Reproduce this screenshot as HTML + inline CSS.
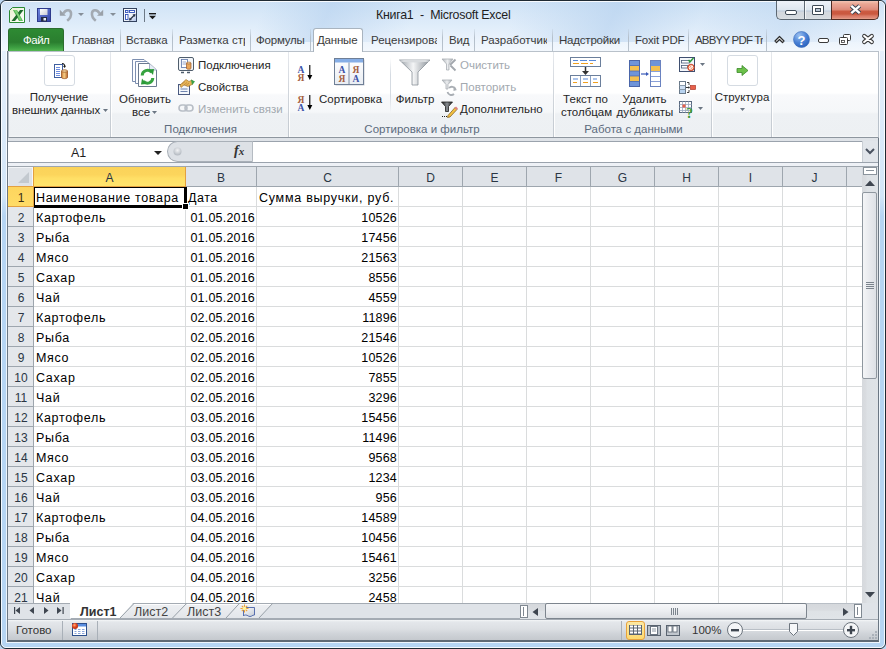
<!DOCTYPE html><html><head><meta charset="utf-8"><style>
html,body{margin:0;padding:0;width:886px;height:649px;overflow:hidden;background:#bcd6f1;}
body{position:relative;font-family:"Liberation Sans", sans-serif;}
.t{position:absolute;white-space:nowrap;font-family:"Liberation Sans", sans-serif;}
.b{position:absolute;box-sizing:border-box;}
svg.b{overflow:visible}
</style></head><body>
<div class="b" style="left:0px;top:0px;width:886px;height:649px;border:1px solid #1f2a33;border-radius:6px 6px 6px 6px;background:linear-gradient(180deg,#c9def5 0px,#d5e6f8 20px,#e6f0fb 45px,#dcebfa 120px,#d3e6f8 195px,#b6d5f3 215px,#b6d5f3 100%);"></div>
<div class="b" style="left:1px;top:1px;width:884px;height:647px;border:1px solid rgba(255,255,255,0.85);border-radius:5px;"></div>
<div class="b" style="left:2px;top:2px;width:882px;height:49px;background:linear-gradient(180deg,#cfe2f6 0px,#d8e8f8 12px,#e0edfa 24px,#ebf3fc 38px,#f3f8fd 49px);border-radius:4px 4px 0 0;"></div>
<div class="b" style="left:2px;top:2px;width:882px;height:40px;background:linear-gradient(115deg,rgba(190,214,240,0) 0px,rgba(190,214,240,0) 240px,rgba(180,208,238,0.55) 300px,rgba(190,214,240,0) 380px,rgba(190,214,240,0) 470px,rgba(180,208,238,0.6) 560px,rgba(190,214,240,0.1) 640px,rgba(180,208,238,0.4) 720px,rgba(190,214,240,0) 800px);"></div>
<div class="t" style="left:376px;top:7px;font-size:12.4px;line-height:16px;color:#1e1e1e;letter-spacing:-0.25px;">Книга1&nbsp;&nbsp;-&nbsp;&nbsp;Microsoft Excel</div>
<svg class="b" style="left:9px;top:7px;" width="16" height="16" viewBox="0 0 16 16">
<defs><linearGradient id="xg" x1="0" y1="0" x2="1" y2="1"><stop offset="0" stop-color="#e8efd0"/><stop offset="1" stop-color="#ffffff"/></linearGradient></defs>
<path d="M3.5 0.5 H15.5 V15.5 H0.5 V3.5 Z" fill="url(#xg)" stroke="#2a8a34"/>
<path d="M4 3 H8 L14 14 H10 Z" fill="#4fb64f"/>
<path d="M11 3 H14.5 L6 14 H2.5 Z" fill="#1d6b2c"/>
<path d="M5 3 H7.5 L13 13.5 H11 Z" fill="#7fd07a"/>
</svg>
<div class="b" style="left:29px;top:9px;width:1px;height:13px;background:#7a8796;"></div>
<svg class="b" style="left:37px;top:8px;" width="14" height="14" viewBox="0 0 14 14">
<defs><linearGradient id="svg1" x1="0" y1="0" x2="1" y2="1"><stop offset="0" stop-color="#6f86e0"/><stop offset="1" stop-color="#3344a6"/></linearGradient>
<linearGradient id="svg2" x1="0" y1="0" x2="1" y2="1"><stop offset="0" stop-color="#ffffff"/><stop offset="1" stop-color="#c9ccd6"/></linearGradient></defs>
<rect x="0.5" y="0.5" width="13" height="13" fill="url(#svg1)" stroke="#2d3a8c"/>
<rect x="3" y="1" width="7.5" height="6" fill="url(#svg2)"/>
<rect x="4" y="9" width="6" height="4.5" fill="#222a44"/>
<rect x="6.5" y="10" width="2.5" height="2.5" fill="#e8ecf4"/>
</svg>
<svg class="b" style="left:59px;top:8px;" width="14" height="14" viewBox="0 0 14 14"><path d="M4.5 5.5 C6.5 1.5 11.5 1.2 12 5 C12.4 8 10.5 11 8.2 12.8" fill="none" stroke="#a3aab2" stroke-width="2.6"/><path d="M0.8 1.8 V7.8 H7 Z" fill="#9aa1a9"/></svg>
<svg class="b" style="left:78px;top:13px;" width="6" height="3" viewBox="0 0 6 3"><path d="M0 0 H6 L3 3 Z" fill="#858e98"/></svg>
<svg class="b" style="left:90px;top:8px;" width="14" height="14" viewBox="0 0 14 14"><path d="M9.5 5.5 C7.5 1.5 2.5 1.2 2 5 C1.6 8 3.5 11 5.8 12.8" fill="none" stroke="#a3aab2" stroke-width="2.6"/><path d="M13.2 1.8 V7.8 H7 Z" fill="#9aa1a9"/></svg>
<svg class="b" style="left:110px;top:13px;" width="6" height="3" viewBox="0 0 6 3"><path d="M0 0 H6 L3 3 Z" fill="#858e98"/></svg>
<svg class="b" style="left:123px;top:8px;" width="14" height="14" viewBox="0 0 14 14"><defs><linearGradient id="fmg" x1="0" y1="0" x2="1" y2="1"><stop offset="0" stop-color="#ffffff"/><stop offset="0.6" stop-color="#eef2f8"/><stop offset="1" stop-color="#a9bde6"/></linearGradient></defs>
<rect x="0.5" y="0.5" width="13" height="13" fill="url(#fmg)" stroke="#34425e"/>
<rect x="2.5" y="2.5" width="2.5" height="2" fill="#fff" stroke="#3050b8" stroke-width="0.9"/>
<rect x="6.5" y="2.5" width="5" height="2" fill="#fff" stroke="#3050b8" stroke-width="0.9"/>
<rect x="2.5" y="6.5" width="2.5" height="5" fill="#fff" stroke="#3050b8" stroke-width="0.9"/>
<path d="M7 11.5 L11.5 7" stroke="#2a3448" stroke-width="1.2"/><path d="M6 12.5 L6.5 9.5 L9 12 Z M12.5 6 L12 9 L9.5 6.5 Z" fill="#2a3448"/></svg>
<div class="b" style="left:144px;top:9px;width:1px;height:13px;background:#6d7986;"></div>
<svg class="b" style="left:149px;top:13px;" width="7" height="7" viewBox="0 0 7 7"><rect x="0" y="0" width="7" height="1.4" fill="#1a1a1a"/><path d="M0 2.8 H7 L3.5 6.3 Z" fill="#1a1a1a"/></svg>
<div class="b" style="left:776px;top:1px;width:56px;height:19px;border:1px solid #5d6873;border-top:none;border-right:none;border-radius:0 0 0 5px;background:linear-gradient(180deg,#eef3f9 0px,#e6edf5 4px,#dde6ef 9px,#bdcbdc 10px,#d3d8de 11px,#d6dbe0 17px,#e9ecef 19px);"></div>
<div class="b" style="left:804px;top:1px;width:1px;height:18px;background:#5d6873;"></div>
<div class="b" style="left:805px;top:1px;width:1px;height:18px;background:rgba(255,255,255,0.7);"></div>
<div class="b" style="left:831px;top:1px;width:48px;height:19px;border:1px solid #4f2a22;border-top:none;border-radius:0 0 5px 0;background:linear-gradient(180deg,#f2c4b4 0px,#eaa592 3px,#e4998a 6px,#dd8976 9px,#cc5a42 10px,#c9583f 13px,#d97a66 15px,#de8a78 17px,#f0c8a8 19px);"></div>
<div class="b" style="left:785px;top:10px;width:12px;height:5px;background:#fff;border:1px solid #3e4a56;border-radius:2px;"></div>
<div class="b" style="left:812px;top:5px;width:12px;height:10px;background:#fff;border:1px solid #3e4a56;border-radius:1px;"></div>
<div class="b" style="left:815px;top:8px;width:6px;height:4px;background:#b9c6d4;border:1px solid #3e4a56;"></div>
<svg class="b" style="left:849px;top:4px;" width="13" height="12" viewBox="0 0 13 12"><path d="M2.3 1.9 L10.7 9.1 M10.7 1.9 L2.3 9.1" stroke="#3a4654" stroke-width="4.4" stroke-linecap="butt"/><path d="M2.3 1.9 L10.7 9.1 M10.7 1.9 L2.3 9.1" stroke="#ffffff" stroke-width="2.4" stroke-linecap="butt"/></svg>
<div class="b" style="left:8px;top:28px;width:56px;height:23px;background:linear-gradient(180deg,#2e8a33 0%,#2a7e2f 60%,#3ea043 85%,#55b652 100%);border:1px solid #2c6d2e;border-bottom:none;border-radius:3px 3px 0 0;"></div>
<div class="t" style="left:23px;top:33px;font-size:11.5px;line-height:14px;color:#ffffff;letter-spacing:-0.5px;">Файл</div>
<div class="b" style="left:120px;top:29px;width:1px;height:22px;background:linear-gradient(180deg,rgba(170,185,200,0.2),#b4bfca 40%,#b9c3cd);"></div>
<div class="b" style="left:172px;top:29px;width:1px;height:22px;background:linear-gradient(180deg,rgba(170,185,200,0.2),#b4bfca 40%,#b9c3cd);"></div>
<div class="b" style="left:250px;top:29px;width:1px;height:22px;background:linear-gradient(180deg,rgba(170,185,200,0.2),#b4bfca 40%,#b9c3cd);"></div>
<div class="b" style="left:310px;top:29px;width:1px;height:22px;background:linear-gradient(180deg,rgba(170,185,200,0.2),#b4bfca 40%,#b9c3cd);"></div>
<div class="b" style="left:442px;top:29px;width:1px;height:22px;background:linear-gradient(180deg,rgba(170,185,200,0.2),#b4bfca 40%,#b9c3cd);"></div>
<div class="b" style="left:474px;top:29px;width:1px;height:22px;background:linear-gradient(180deg,rgba(170,185,200,0.2),#b4bfca 40%,#b9c3cd);"></div>
<div class="b" style="left:552px;top:29px;width:1px;height:22px;background:linear-gradient(180deg,rgba(170,185,200,0.2),#b4bfca 40%,#b9c3cd);"></div>
<div class="b" style="left:628px;top:29px;width:1px;height:22px;background:linear-gradient(180deg,rgba(170,185,200,0.2),#b4bfca 40%,#b9c3cd);"></div>
<div class="b" style="left:688px;top:29px;width:1px;height:22px;background:linear-gradient(180deg,rgba(170,185,200,0.2),#b4bfca 40%,#b9c3cd);"></div>
<div class="b" style="left:766px;top:29px;width:1px;height:22px;background:linear-gradient(180deg,rgba(170,185,200,0.2),#b4bfca 40%,#b9c3cd);"></div>
<div class="b" style="left:313px;top:28px;width:50px;height:24px;background:#ffffff;border:1px solid #a9b4bf;border-bottom:none;border-radius:3px 3px 0 0;z-index:2;"></div>
<div class="t" style="left:72px;top:33px;font-size:11.5px;line-height:14px;color:#3b3b3b;z-index:3;letter-spacing:-0.2px;">Главная</div>
<div class="t" style="left:126px;top:33px;font-size:11.5px;line-height:14px;color:#3b3b3b;z-index:3;letter-spacing:-0.2px;">Вставка</div>
<div class="t" style="left:179px;top:33px;font-size:11.5px;line-height:14px;color:#3b3b3b;width:66px;overflow:hidden;z-index:3;">Разметка стр</div>
<div class="t" style="left:256px;top:33px;font-size:11.5px;line-height:14px;color:#3b3b3b;z-index:3;letter-spacing:-0.2px;">Формулы</div>
<div class="t" style="left:317px;top:33px;font-size:11.5px;line-height:14px;color:#3b3b3b;z-index:3;letter-spacing:-0.2px;">Данные</div>
<div class="t" style="left:371px;top:33px;font-size:11.5px;line-height:14px;color:#3b3b3b;width:66px;overflow:hidden;z-index:3;">Рецензирова</div>
<div class="t" style="left:449px;top:33px;font-size:11.5px;line-height:14px;color:#3b3b3b;z-index:3;letter-spacing:-0.2px;">Вид</div>
<div class="t" style="left:481px;top:33px;font-size:11.5px;line-height:14px;color:#3b3b3b;width:66px;overflow:hidden;z-index:3;">Разработчик</div>
<div class="t" style="left:559px;top:33px;font-size:11.5px;line-height:14px;color:#3b3b3b;z-index:3;letter-spacing:-0.2px;">Надстройки</div>
<div class="t" style="left:635px;top:33px;font-size:11.5px;line-height:14px;color:#3b3b3b;z-index:3;letter-spacing:-0.2px;">Foxit PDF</div>
<div class="t" style="left:695px;top:33px;font-size:11.5px;line-height:14px;color:#3b3b3b;width:68px;overflow:hidden;z-index:3;letter-spacing:-0.8px;">ABBYY PDF Tr</div>
<svg class="b" style="left:774px;top:35px;" width="11" height="9" viewBox="0 0 11 9"><path d="M1 6 L5.5 1.5 L10 6 L8.5 7.5 L5.5 4.5 L2.5 7.5 Z" fill="#fff" stroke="#2d2d2d" stroke-width="1.2" stroke-linejoin="round"/></svg>
<svg class="b" style="left:793px;top:31px;" width="17" height="17" viewBox="0 0 17 17"><defs><radialGradient id="hg" cx="35%" cy="25%" r="75%"><stop offset="0" stop-color="#9cc0f0"/><stop offset="0.6" stop-color="#4a82d6"/><stop offset="1" stop-color="#2f66c0"/></radialGradient></defs><circle cx="8.5" cy="8.5" r="8" fill="url(#hg)" stroke="#3a6cb8" stroke-width="0.6"/><text x="8.5" y="13.5" text-anchor="middle" font-family="Liberation Sans" font-weight="bold" font-size="13" fill="#fff">?</text></svg>
<div class="b" style="left:818px;top:38px;width:11px;height:5px;background:#fff;border:1px solid #3b3b3b;border-radius:2px;"></div>
<svg class="b" style="left:839px;top:34px;" width="12" height="11" viewBox="0 0 12 11"><rect x="4.5" y="0.5" width="7" height="6" rx="1" fill="#fff" stroke="#3b3b3b"/><rect x="0.5" y="3.5" width="8" height="7" rx="1" fill="#fff" stroke="#3b3b3b"/><rect x="2.5" y="6.5" width="3" height="2" fill="#fff" stroke="#3b3b3b" stroke-width="0.8"/></svg>
<svg class="b" style="left:862px;top:34px;" width="12" height="10" viewBox="0 0 12 10"><path d="M2.2 2 L9.8 8 M9.8 2 L2.2 8" stroke="#3b3b3b" stroke-width="4.2" stroke-linecap="round"/><path d="M2.2 2 L9.8 8 M9.8 2 L2.2 8" stroke="#fff" stroke-width="2.2" stroke-linecap="round"/></svg>
<div class="b" style="left:8px;top:51px;width:871px;height:87px;background:linear-gradient(180deg,#ffffff 0px,#ffffff 41px,#f8f9fb 43px,#f5f7f9 60px,#eef1f4 62px,#edf0f3 83px,#f6f7f9 85px);border:1px solid #b9c1ca;border-bottom:1px solid #8e969f;"></div>
<div class="b" style="left:110px;top:52px;width:1px;height:85px;background:linear-gradient(180deg,#e6e9ed,#d3d8de 40%,#c3c9d0);"></div>
<div class="b" style="left:111px;top:52px;width:1px;height:85px;background:rgba(255,255,255,0.9);"></div>
<div class="b" style="left:288px;top:52px;width:1px;height:85px;background:linear-gradient(180deg,#e6e9ed,#d3d8de 40%,#c3c9d0);"></div>
<div class="b" style="left:289px;top:52px;width:1px;height:85px;background:rgba(255,255,255,0.9);"></div>
<div class="b" style="left:553px;top:52px;width:1px;height:85px;background:linear-gradient(180deg,#e6e9ed,#d3d8de 40%,#c3c9d0);"></div>
<div class="b" style="left:554px;top:52px;width:1px;height:85px;background:rgba(255,255,255,0.9);"></div>
<div class="b" style="left:711px;top:52px;width:1px;height:85px;background:linear-gradient(180deg,#e6e9ed,#d3d8de 40%,#c3c9d0);"></div>
<div class="b" style="left:712px;top:52px;width:1px;height:85px;background:rgba(255,255,255,0.9);"></div>
<div class="b" style="left:771px;top:52px;width:1px;height:85px;background:linear-gradient(180deg,#e6e9ed,#d3d8de 40%,#c3c9d0);"></div>
<div class="b" style="left:772px;top:52px;width:1px;height:85px;background:rgba(255,255,255,0.9);"></div>
<div class="t" style="left:50.5px;width:300px;text-align:center;top:122px;font-size:11.5px;line-height:14px;color:#5c6b7d;">Подключения</div>
<div class="t" style="left:272px;width:300px;text-align:center;top:122px;font-size:11.5px;line-height:14px;color:#5c6b7d;">Сортировка и фильтр</div>
<div class="t" style="left:483.5px;width:300px;text-align:center;top:122px;font-size:11.5px;line-height:14px;color:#5c6b7d;">Работа с данными</div>
<div class="b" style="left:44px;top:55px;width:31px;height:31px;border:1px solid #d5dbe2;border-radius:3px;background:#fff;"></div>
<svg class="b" style="left:52px;top:62px;" width="17" height="18" viewBox="0 0 17 18">
<defs><linearGradient id="cyl" x1="0" x2="1"><stop offset="0" stop-color="#c7742e"/><stop offset="0.45" stop-color="#f6d08a"/><stop offset="1" stop-color="#b8652a"/></linearGradient></defs>
<rect x="2.5" y="2.5" width="8" height="13" fill="#ffffff" stroke="#3f5f9f"/>
<path d="M4 5.5 H8 M4 7.5 H8 M4 9.5 H8 M4 11.5 H8 M4 13.5 H8" stroke="#6d8ce0"/>
<path d="M10 1.5 C12 1.5 13 3 12.5 5" fill="none" stroke="#1d1d1d" stroke-width="1.2"/><path d="M11 4 L12.6 6 L14 3.8 Z" fill="#1d1d1d"/>
<path d="M9.5 9 V15.5 C9.5 17 15.5 17 15.5 15.5 V9 Z" fill="url(#cyl)" stroke="#9a5522" stroke-width="0.8"/>
<ellipse cx="12.5" cy="9" rx="3" ry="1.2" fill="#f8dca8" stroke="#9a5522" stroke-width="0.8"/>
</svg>
<div class="t" style="left:-91px;width:300px;text-align:center;top:90px;font-size:11.5px;line-height:14px;color:#262626;">Получение</div>
<div class="t" style="left:-94px;width:300px;text-align:center;top:103px;font-size:11.5px;line-height:14px;color:#262626;letter-spacing:-0.1px;">внешних данных</div>
<svg class="b" style="left:103px;top:109px;" width="5" height="3" viewBox="0 0 5 3"><path d="M0 0 H5 L2.5 3 Z" fill="#6b7683"/></svg>
<svg class="b" style="left:131px;top:58px;" width="28" height="30" viewBox="0 0 28 30">
<path d="M1.5 1.5 H13 L17 5.5 V23.5 H1.5 Z" fill="#fdfdff" stroke="#7d8fb0"/>
<path d="M4.5 3.5 H16 L20 7.5 V25.5 H4.5 Z" fill="#fdfdff" stroke="#7d8fb0"/>
<path d="M7.5 5.5 H18.5 L25.5 12 V28.5 H7.5 Z" fill="#ffffff" stroke="#6b7a90"/>
<path d="M18.5 5.5 V12 H25.5" fill="#e6ecf6" stroke="#8a9ab5" stroke-width="0.8"/>
<path d="M11.2 17.5 A5.3 5.3 0 0 1 20.5 14.2" fill="none" stroke="#36a340" stroke-width="3"/>
<path d="M21.8 20 A5.3 5.3 0 0 1 12.5 23.3" fill="none" stroke="#36a340" stroke-width="3"/>
<path d="M17.5 11.5 L23 11 L22 17 Z" fill="#2b9a38"/>
<path d="M15.5 26 L10 26.5 L11 20.5 Z" fill="#2b9a38"/>
</svg>
<div class="t" style="left:-5px;width:300px;text-align:center;top:92px;font-size:11.5px;line-height:14px;color:#262626;">Обновить</div>
<div class="t" style="left:132px;top:105px;font-size:11.5px;line-height:14px;color:#262626;">все</div>
<svg class="b" style="left:152px;top:111px;" width="5" height="3" viewBox="0 0 5 3"><path d="M0 0 H5 L2.5 3 Z" fill="#6b7683"/></svg>
<svg class="b" style="left:178px;top:57px;" width="17" height="17" viewBox="0 0 17 17"><rect x="0.5" y="0.5" width="15" height="13" rx="1.5" fill="#f2f5f9" stroke="#4f5d6c"/><path d="M3 15.5 H6 M9 15.5 H12" stroke="#4f5d6c" stroke-width="1.6"/>
<rect x="3.5" y="2.5" width="6" height="8" fill="#fff" stroke="#5b74a8" stroke-width="0.8"/><path d="M4.5 5 H8 M4.5 7 H8" stroke="#7a8fc0" stroke-width="0.8"/>
<path d="M8.5 6 V11.5 C8.5 12.5 13 12.5 13 11.5 V6 Z" fill="#e9a65a" stroke="#9a5522" stroke-width="0.7"/><ellipse cx="10.75" cy="6" rx="2.25" ry="0.9" fill="#f8dca8" stroke="#9a5522" stroke-width="0.6"/></svg>
<div class="t" style="left:198px;top:58px;font-size:11.5px;line-height:14px;color:#262626;">Подключения</div>
<svg class="b" style="left:178px;top:79px;" width="17" height="16" viewBox="0 0 17 16"><rect x="0.5" y="5.5" width="11" height="10" fill="#f4f7fb" stroke="#4a5a80"/><path d="M2.5 10 H9.5 M2.5 12.5 H9.5" stroke="#6f84b0"/><path d="M2 6 L8 0.5 L11 2.5 L14 1 L15 5 L10 7.5 L6 6 L3 8.5 Z" fill="#e6b458" stroke="#9a6a25" stroke-width="0.6"/><path d="M4 5 L7 2.5 M6 6 L9 3.5 M8 6.5 L11 4" stroke="#b07a30" stroke-width="0.6"/><path d="M13 0.5 L17 2.5 L14 6 Z" fill="#3aa048"/></svg>
<div class="t" style="left:198px;top:80px;font-size:11.5px;line-height:14px;color:#262626;">Свойства</div>
<svg class="b" style="left:178px;top:103px;" width="16" height="10" viewBox="0 0 16 10"><rect x="1" y="2" width="8" height="6" rx="3" fill="none" stroke="#b8bec6" stroke-width="1.6"/><rect x="7" y="2" width="8" height="6" rx="3" fill="none" stroke="#b8bec6" stroke-width="1.6"/></svg>
<div class="t" style="left:198px;top:102px;font-size:11.5px;line-height:14px;color:#a3a9b0;">Изменить связи</div>
<svg class="b" style="left:297px;top:64px;" width="17" height="18" viewBox="0 0 17 18"><text x="0.5" y="8.5" font-family="Liberation Serif" font-weight="bold" font-size="9.5" fill="#3b52a8">A</text><text x="0.5" y="16.5" font-family="Liberation Serif" font-weight="bold" font-size="9.5" fill="#a5603e">Я</text><path d="M12.8 1 V14" stroke="#000" stroke-width="1.1"/><path d="M10.3 11 L12.8 16 L15.3 11 Z" fill="#000"/></svg>
<svg class="b" style="left:297px;top:94px;" width="17" height="18" viewBox="0 0 17 18"><text x="0.5" y="8.5" font-family="Liberation Serif" font-weight="bold" font-size="9.5" fill="#a5603e">Я</text><text x="0.5" y="16.5" font-family="Liberation Serif" font-weight="bold" font-size="9.5" fill="#3b52a8">A</text><path d="M12.8 1 V14" stroke="#000" stroke-width="1.1"/><path d="M10.3 11 L12.8 16 L15.3 11 Z" fill="#000"/></svg>
<svg class="b" style="left:334px;top:58px;" width="31" height="28" viewBox="0 0 31 28"><defs><linearGradient id="sg" x1="0" y1="0" x2="0" y2="1"><stop offset="0" stop-color="#ffffff"/><stop offset="1" stop-color="#e9edf3"/></linearGradient></defs>
<rect x="1.5" y="1.5" width="29" height="26" fill="#c9ced6"/>
<rect x="0.5" y="0.5" width="29" height="26" fill="url(#sg)" stroke="#6f7f96"/><rect x="1" y="1" width="28" height="3.5" fill="#86aee6"/><path d="M15 4.5 V26" stroke="#7f8ea6"/>
<text x="4.5" y="14.5" font-family="Liberation Serif" font-weight="bold" font-size="9.5" fill="#3b52a8">A</text><text x="4.5" y="23.5" font-family="Liberation Serif" font-weight="bold" font-size="9.5" fill="#a5603e">Я</text>
<text x="18.5" y="14.5" font-family="Liberation Serif" font-weight="bold" font-size="9.5" fill="#a5603e">Я</text><text x="18.5" y="23.5" font-family="Liberation Serif" font-weight="bold" font-size="9.5" fill="#3b52a8">A</text></svg>
<div class="t" style="left:200.5px;width:300px;text-align:center;top:92px;font-size:11.5px;line-height:14px;color:#262626;">Сортировка</div>
<div class="b" style="left:390px;top:58px;width:1px;height:55px;background:linear-gradient(180deg,rgba(210,216,224,0),#d5dbe2 30%,#d5dbe2 70%,rgba(210,216,224,0));"></div>
<svg class="b" style="left:399px;top:59px;" width="32" height="27" viewBox="0 0 32 27"><defs><linearGradient id="fg" x1="0" x2="1"><stop offset="0" stop-color="#9aa1a8"/><stop offset="0.45" stop-color="#f4f5f6"/><stop offset="1" stop-color="#8a9198"/></linearGradient></defs>
<path d="M0.5 1 H31 L19 13 V26 H13 V13 Z" fill="url(#fg)" stroke="#8c939a" stroke-width="0.8"/><ellipse cx="15.75" cy="2" rx="15" ry="1.5" fill="#d9dcdf"/></svg>
<div class="t" style="left:265px;width:300px;text-align:center;top:92px;font-size:11.5px;line-height:14px;color:#262626;">Фильтр</div>
<svg class="b" style="left:441px;top:58px;" width="16" height="14" viewBox="0 0 16 14"><defs><linearGradient id="gf" x1="0" x2="1"><stop offset="0" stop-color="#b0b5ba"/><stop offset="0.5" stop-color="#eceef0"/><stop offset="1" stop-color="#a5aab0"/></linearGradient></defs><path d="M1 1 H12 L8 6 V12 H5.5 V6 Z" fill="url(#gf)" stroke="#a9aeb4" stroke-width="0.8"/><path d="M9 7 L14.5 1.5 M9.5 7.5 L14.5 12.5" stroke="#a3a8ae" stroke-width="1.8"/></svg>
<div class="t" style="left:460px;top:58px;font-size:11.5px;line-height:14px;color:#a3a9b0;">Очистить</div>
<svg class="b" style="left:441px;top:79px;" width="17" height="16" viewBox="0 0 17 16"><path d="M1 1 H11 L7 5.5 V10 H5 V5.5 Z" fill="url(#gf)" stroke="#a9aeb4" stroke-width="0.8"/><path d="M8 9 A4 4 0 0 1 14.5 10" fill="none" stroke="#a9aeb4" stroke-width="1.8"/><path d="M13 15 A4 4 0 0 1 6.5 13" fill="none" stroke="#a9aeb4" stroke-width="1.8"/><path d="M12.5 8 L16 11 L12.5 12 Z" fill="#a9aeb4"/></svg>
<div class="t" style="left:460px;top:80px;font-size:11.5px;line-height:14px;color:#a3a9b0;">Повторить</div>
<svg class="b" style="left:441px;top:101px;" width="17" height="16" viewBox="0 0 17 16"><defs><linearGradient id="gd" x1="0" x2="1"><stop offset="0" stop-color="#1a1a1a"/><stop offset="0.5" stop-color="#8a8f94"/><stop offset="1" stop-color="#1a1a1a"/></linearGradient></defs><path d="M0.5 1 H11.5 L7.5 5.5 V10.5 H4.5 V5.5 Z" fill="url(#gd)" stroke="#222" stroke-width="0.8"/><path d="M7 14.5 L14 6.5 L16 8.5 L9 16 L6.5 16.5 Z" fill="#f2c040" stroke="#7a5a20" stroke-width="0.7"/><path d="M13.5 7 L15 5.5 L17 7.5 L15.5 9 Z" fill="#e08080"/><path d="M1 15.5 H2 M3 15.5 H4 M5 15.5 H6" stroke="#222"/></svg>
<div class="t" style="left:460px;top:102px;font-size:11.5px;line-height:14px;color:#262626;">Дополнительно</div>
<svg class="b" style="left:570px;top:57px;" width="32" height="30" viewBox="0 0 32 30"><rect x="0.5" y="0.5" width="30" height="9" fill="#fff" stroke="#6b7f9c"/><path d="M3 3.5 H8 M10 3.5 H17 M19 3.5 H26" stroke="#5a8ad8" stroke-width="1.2"/><path d="M3 6.5 H9 M11 6.5 H18 M20 6.5 H23" stroke="#f0a020" stroke-width="1.2"/>
<path d="M15.5 10 V16" stroke="#333" stroke-width="1.5"/><path d="M12 14 L15.5 18 L19 14 Z" fill="#333"/>
<rect x="0.5" y="18.5" width="30" height="11" fill="#fff" stroke="#6b7f9c"/><path d="M10.5 19 V29 M20.5 19 V29" stroke="#8aa0c0"/><path d="M3 22 H8 M13 22 H18 M23 22 H27" stroke="#5a8ad8" stroke-width="1.2"/><path d="M3 25.5 H7 M13 25.5 H18 M23 25.5 H28" stroke="#f0a020" stroke-width="1.2"/></svg>
<div class="t" style="left:435.5px;width:300px;text-align:center;top:92px;font-size:11.5px;line-height:14px;color:#262626;">Текст по</div>
<div class="t" style="left:436.5px;width:300px;text-align:center;top:105px;font-size:11.5px;line-height:14px;color:#262626;">столбцам</div>
<svg class="b" style="left:629px;top:60px;" width="33" height="28" viewBox="0 0 33 28"><rect x="0.5" y="0.5" width="10" height="26" fill="#6f94d8" stroke="#4a65a8"/><rect x="1" y="6" width="9" height="5" fill="#f4c050"/><rect x="1" y="16" width="9" height="5" fill="#f4c050"/>
<path d="M1 5.5 H10 M1 11 H10 M1 16 H10 M1 21.5 H10" stroke="#4a65a8" stroke-width="0.7"/>
<path d="M12 14 H18" stroke="#3a5ab8" stroke-width="1.2"/><path d="M17 12 L20 14 L17 16 Z" fill="#3a5ab8"/>
<rect x="21.5" y="0.5" width="10" height="26" fill="#fff" stroke="#6a82c0"/><rect x="22" y="1" width="9" height="5" fill="#6f94d8"/><rect x="22" y="6" width="9" height="5" fill="#f4c050"/><path d="M22 11.5 H31 M22 16.5 H31 M22 21.5 H31" stroke="#8aa0d8"/></svg>
<div class="t" style="left:494.5px;width:300px;text-align:center;top:92px;font-size:11.5px;line-height:14px;color:#262626;">Удалить</div>
<div class="t" style="left:495px;width:300px;text-align:center;top:105px;font-size:11.5px;line-height:14px;color:#262626;">дубликаты</div>
<svg class="b" style="left:679px;top:57px;" width="17" height="16" viewBox="0 0 17 16"><rect x="0.5" y="0.5" width="15" height="14" fill="#f4f7fb" stroke="#3f4f70"/>
<rect x="2.5" y="3.5" width="8" height="2.5" fill="#fff" stroke="#4a5a78" stroke-width="0.8"/><rect x="2.5" y="8.5" width="6" height="2.5" fill="#fff" stroke="#4a5a78" stroke-width="0.8"/>
<path d="M9.5 3 L11 4.8 L14.5 1" fill="none" stroke="#2f9a3a" stroke-width="1.5"/>
<circle cx="12" cy="10.5" r="3.3" fill="#f06a3a" stroke="#c0402a" stroke-width="0.8"/><path d="M10.3 12.2 L13.7 8.8" stroke="#fff" stroke-width="1.1"/><circle cx="12" cy="10.5" r="1.8" fill="none" stroke="#fff" stroke-width="0.9"/></svg>
<svg class="b" style="left:700px;top:63px;" width="5" height="3" viewBox="0 0 5 3"><path d="M0 0 H5 L2.5 3 Z" fill="#6b7683"/></svg>
<svg class="b" style="left:679px;top:81px;" width="17" height="13" viewBox="0 0 17 13"><rect x="0.5" y="0.5" width="6" height="12" fill="#fff" stroke="#6a7a8a"/><rect x="1" y="4.5" width="5" height="3.5" fill="#cfe0f4"/><rect x="1" y="8.5" width="5" height="3.5" fill="#b8d3f0"/><path d="M0.5 4.5 H6.5 M0.5 8.5 H6.5" stroke="#8a9aaa"/>
<path d="M8 1.5 H10 V4 M8 11.5 H10 V9" fill="none" stroke="#333" stroke-width="0.9"/><path d="M7 6.5 H10" stroke="#333" stroke-width="1"/><path d="M9.5 5 L11 6.5 L9.5 8 Z" fill="#333"/>
<rect x="11.5" y="4.5" width="5" height="4" fill="#e8604a" stroke="#b03a2a" stroke-width="0.7"/></svg>
<svg class="b" style="left:679px;top:101px;" width="17" height="17" viewBox="0 0 17 17"><rect x="0.5" y="0.5" width="12" height="11" fill="#fff" stroke="#5a6a80"/><path d="M0.5 3.5 H12.5 M0.5 6.5 H12.5 M0.5 9.5 H12.5 M3.5 0.5 V11.5 M6.5 0.5 V11.5 M9.5 0.5 V11.5" stroke="#9aaac0" stroke-width="0.8"/><rect x="3.5" y="3.5" width="3" height="3" fill="#e8604a"/>
<text x="7" y="16.5" font-family="Liberation Serif" font-weight="bold" font-size="14" fill="#3a9a3a">?</text></svg>
<svg class="b" style="left:698px;top:107px;" width="5" height="3" viewBox="0 0 5 3"><path d="M0 0 H5 L2.5 3 Z" fill="#6b7683"/></svg>
<div class="b" style="left:727px;top:55px;width:31px;height:31px;border:1px solid #d5dbe2;border-radius:3px;background:#fff;"></div>
<svg class="b" style="left:736px;top:65px;" width="13" height="11" viewBox="0 0 13 11"><path d="M1 3.5 H6 V0.5 L12 5.5 L6 10.5 V7.5 H1 Z" fill="#6cc04a" stroke="#3a8a2a" stroke-width="0.8"/></svg>
<div class="t" style="left:592px;width:300px;text-align:center;top:90px;font-size:11.5px;line-height:14px;color:#262626;">Структура</div>
<svg class="b" style="left:740px;top:108px;" width="5" height="3" viewBox="0 0 5 3"><path d="M0 0 H5 L2.5 3 Z" fill="#6b7683"/></svg>
<div class="b" style="left:8px;top:138px;width:871px;height:28px;background:#dfe3e8;"></div>
<div class="b" style="left:8px;top:141px;width:870px;height:22px;background:#ffffff;border-top:1px solid #9ba3ad;border-bottom:1px solid #9ba3ad;"></div>
<div class="b" style="left:8px;top:163px;width:870px;height:3px;background:#eef1f6;"></div>
<div class="t" style="left:71px;top:145px;font-size:12.5px;line-height:16px;color:#1e1e1e;">A1</div>
<svg class="b" style="left:154px;top:151px;" width="8" height="4" viewBox="0 0 8 4"><path d="M0 0 H8 L4 4 Z" fill="#222"/></svg>
<div class="b" style="left:167px;top:141px;width:86px;height:21px;background:#dde1e6;border:1px solid #a9b0b8;border-right:1px solid #b5bbc2;border-radius:11px 0 0 11px;"></div>
<svg class="b" style="left:173px;top:147px;" width="9" height="9" viewBox="0 0 9 9"><defs><radialGradient id="cg" cx="50%" cy="35%" r="60%"><stop offset="0" stop-color="#f2f3f5"/><stop offset="1" stop-color="#b5bbc2"/></radialGradient></defs><circle cx="4.5" cy="4.5" r="4" fill="url(#cg)"/></svg>
<div class="t" style="left:234px;top:143px;font-family:'Liberation Serif',serif;font-style:italic;font-weight:bold;font-size:14px;line-height:16px;color:#333;">f<span style="font-size:11px;">x</span></div>
<div class="b" style="left:862px;top:141px;width:16px;height:21px;background:#e1e5ea;border-left:1px solid #c9ced4;"></div>
<svg class="b" style="left:865px;top:148px;" width="10" height="7" viewBox="0 0 10 7"><path d="M1 1 L5 5 L9 1" fill="none" stroke="#4a5260" stroke-width="2"/></svg>
<div class="b" style="left:8px;top:166px;width:854px;height:437px;background:#ffffff;overflow:hidden;"></div>
<div class="b" style="left:8px;top:166px;width:854px;height:21px;background:#dfe3e8;border-top:1px solid #9ea6ae;border-bottom:1px solid #9ea6ae;"></div>
<div class="b" style="left:8px;top:187px;width:26px;height:416px;background:#e4e7eb;"></div>
<div class="b" style="left:8px;top:167px;width:25px;height:19px;border-top:1px solid #f2f4f7;border-left:1px solid #eef1f4;border-right:1px solid #f4f7fb;"></div>
<svg class="b" style="left:18px;top:172px;" width="11" height="11" viewBox="0 0 11 11"><path d="M11 0 V11 H0 Z" fill="#c3c9cf"/></svg>
<div class="b" style="left:34px;top:167px;width:152px;height:20px;background:linear-gradient(180deg,#fbd35a 0%,#fcd55c 40%,#ffdf66 60%,#ffe46c 95%);border-bottom:1px solid #e3a040;"></div>
<div class="b" style="left:8px;top:187px;width:26px;height:20px;background:linear-gradient(180deg,#fdd55e,#ffdc66);border-bottom:1px solid #e3a040;"></div>
<div class="b" style="left:185px;top:167px;width:1px;height:19px;background:#e3a040;"></div>
<div class="b" style="left:185px;top:187px;width:1px;height:416px;background:#dadcdd;"></div>
<div class="b" style="left:256px;top:167px;width:1px;height:19px;background:#9ea6ae;"></div>
<div class="b" style="left:256px;top:187px;width:1px;height:416px;background:#dadcdd;"></div>
<div class="b" style="left:398px;top:167px;width:1px;height:19px;background:#9ea6ae;"></div>
<div class="b" style="left:398px;top:187px;width:1px;height:416px;background:#dadcdd;"></div>
<div class="b" style="left:462px;top:167px;width:1px;height:19px;background:#9ea6ae;"></div>
<div class="b" style="left:462px;top:187px;width:1px;height:416px;background:#dadcdd;"></div>
<div class="b" style="left:526px;top:167px;width:1px;height:19px;background:#9ea6ae;"></div>
<div class="b" style="left:526px;top:187px;width:1px;height:416px;background:#dadcdd;"></div>
<div class="b" style="left:590px;top:167px;width:1px;height:19px;background:#9ea6ae;"></div>
<div class="b" style="left:590px;top:187px;width:1px;height:416px;background:#dadcdd;"></div>
<div class="b" style="left:654px;top:167px;width:1px;height:19px;background:#9ea6ae;"></div>
<div class="b" style="left:654px;top:187px;width:1px;height:416px;background:#dadcdd;"></div>
<div class="b" style="left:718px;top:167px;width:1px;height:19px;background:#9ea6ae;"></div>
<div class="b" style="left:718px;top:187px;width:1px;height:416px;background:#dadcdd;"></div>
<div class="b" style="left:782px;top:167px;width:1px;height:19px;background:#9ea6ae;"></div>
<div class="b" style="left:782px;top:187px;width:1px;height:416px;background:#dadcdd;"></div>
<div class="b" style="left:846px;top:167px;width:1px;height:19px;background:#9ea6ae;"></div>
<div class="b" style="left:846px;top:187px;width:1px;height:416px;background:#dadcdd;"></div>
<div class="b" style="left:33px;top:167px;width:1px;height:19px;background:#e3a040;"></div>
<div class="b" style="left:33px;top:187px;width:1px;height:416px;background:#9ea6ae;"></div>
<div class="b" style="left:33px;top:187px;width:1px;height:20px;background:#e3a040;"></div>
<div class="b" style="left:34px;top:206px;width:828px;height:1px;background:#dadcdd;"></div>
<div class="b" style="left:34px;top:226px;width:828px;height:1px;background:#dadcdd;"></div>
<div class="b" style="left:8px;top:226px;width:25px;height:1px;background:#9ea6ae;"></div>
<div class="b" style="left:34px;top:246px;width:828px;height:1px;background:#dadcdd;"></div>
<div class="b" style="left:8px;top:246px;width:25px;height:1px;background:#9ea6ae;"></div>
<div class="b" style="left:34px;top:266px;width:828px;height:1px;background:#dadcdd;"></div>
<div class="b" style="left:8px;top:266px;width:25px;height:1px;background:#9ea6ae;"></div>
<div class="b" style="left:34px;top:286px;width:828px;height:1px;background:#dadcdd;"></div>
<div class="b" style="left:8px;top:286px;width:25px;height:1px;background:#9ea6ae;"></div>
<div class="b" style="left:34px;top:306px;width:828px;height:1px;background:#dadcdd;"></div>
<div class="b" style="left:8px;top:306px;width:25px;height:1px;background:#9ea6ae;"></div>
<div class="b" style="left:34px;top:326px;width:828px;height:1px;background:#dadcdd;"></div>
<div class="b" style="left:8px;top:326px;width:25px;height:1px;background:#9ea6ae;"></div>
<div class="b" style="left:34px;top:346px;width:828px;height:1px;background:#dadcdd;"></div>
<div class="b" style="left:8px;top:346px;width:25px;height:1px;background:#9ea6ae;"></div>
<div class="b" style="left:34px;top:366px;width:828px;height:1px;background:#dadcdd;"></div>
<div class="b" style="left:8px;top:366px;width:25px;height:1px;background:#9ea6ae;"></div>
<div class="b" style="left:34px;top:386px;width:828px;height:1px;background:#dadcdd;"></div>
<div class="b" style="left:8px;top:386px;width:25px;height:1px;background:#9ea6ae;"></div>
<div class="b" style="left:34px;top:406px;width:828px;height:1px;background:#dadcdd;"></div>
<div class="b" style="left:8px;top:406px;width:25px;height:1px;background:#9ea6ae;"></div>
<div class="b" style="left:34px;top:426px;width:828px;height:1px;background:#dadcdd;"></div>
<div class="b" style="left:8px;top:426px;width:25px;height:1px;background:#9ea6ae;"></div>
<div class="b" style="left:34px;top:446px;width:828px;height:1px;background:#dadcdd;"></div>
<div class="b" style="left:8px;top:446px;width:25px;height:1px;background:#9ea6ae;"></div>
<div class="b" style="left:34px;top:466px;width:828px;height:1px;background:#dadcdd;"></div>
<div class="b" style="left:8px;top:466px;width:25px;height:1px;background:#9ea6ae;"></div>
<div class="b" style="left:34px;top:486px;width:828px;height:1px;background:#dadcdd;"></div>
<div class="b" style="left:8px;top:486px;width:25px;height:1px;background:#9ea6ae;"></div>
<div class="b" style="left:34px;top:506px;width:828px;height:1px;background:#dadcdd;"></div>
<div class="b" style="left:8px;top:506px;width:25px;height:1px;background:#9ea6ae;"></div>
<div class="b" style="left:34px;top:526px;width:828px;height:1px;background:#dadcdd;"></div>
<div class="b" style="left:8px;top:526px;width:25px;height:1px;background:#9ea6ae;"></div>
<div class="b" style="left:34px;top:546px;width:828px;height:1px;background:#dadcdd;"></div>
<div class="b" style="left:8px;top:546px;width:25px;height:1px;background:#9ea6ae;"></div>
<div class="b" style="left:34px;top:566px;width:828px;height:1px;background:#dadcdd;"></div>
<div class="b" style="left:8px;top:566px;width:25px;height:1px;background:#9ea6ae;"></div>
<div class="b" style="left:34px;top:586px;width:828px;height:1px;background:#dadcdd;"></div>
<div class="b" style="left:8px;top:586px;width:25px;height:1px;background:#9ea6ae;"></div>
<div class="t" style="left:-40.5px;width:300px;text-align:center;top:169px;font-size:12px;line-height:18px;color:#2a3644;">A</div>
<div class="t" style="left:71.0px;width:300px;text-align:center;top:169px;font-size:12px;line-height:18px;color:#2a3644;">B</div>
<div class="t" style="left:177.5px;width:300px;text-align:center;top:169px;font-size:12px;line-height:18px;color:#2a3644;">C</div>
<div class="t" style="left:280.5px;width:300px;text-align:center;top:169px;font-size:12px;line-height:18px;color:#2a3644;">D</div>
<div class="t" style="left:344.5px;width:300px;text-align:center;top:169px;font-size:12px;line-height:18px;color:#2a3644;">E</div>
<div class="t" style="left:408.5px;width:300px;text-align:center;top:169px;font-size:12px;line-height:18px;color:#2a3644;">F</div>
<div class="t" style="left:472.5px;width:300px;text-align:center;top:169px;font-size:12px;line-height:18px;color:#2a3644;">G</div>
<div class="t" style="left:536.5px;width:300px;text-align:center;top:169px;font-size:12px;line-height:18px;color:#2a3644;">H</div>
<div class="t" style="left:600.5px;width:300px;text-align:center;top:169px;font-size:12px;line-height:18px;color:#2a3644;">I</div>
<div class="t" style="left:664.5px;width:300px;text-align:center;top:169px;font-size:12px;line-height:18px;color:#2a3644;">J</div>
<div class="t" style="left:-129px;width:300px;text-align:center;top:189px;font-size:12px;line-height:18px;color:#3a2e14;">1</div>
<div class="t" style="left:-129px;width:300px;text-align:center;top:209px;font-size:12px;line-height:18px;color:#2a3644;">2</div>
<div class="t" style="left:-129px;width:300px;text-align:center;top:229px;font-size:12px;line-height:18px;color:#2a3644;">3</div>
<div class="t" style="left:-129px;width:300px;text-align:center;top:249px;font-size:12px;line-height:18px;color:#2a3644;">4</div>
<div class="t" style="left:-129px;width:300px;text-align:center;top:269px;font-size:12px;line-height:18px;color:#2a3644;">5</div>
<div class="t" style="left:-129px;width:300px;text-align:center;top:289px;font-size:12px;line-height:18px;color:#2a3644;">6</div>
<div class="t" style="left:-129px;width:300px;text-align:center;top:309px;font-size:12px;line-height:18px;color:#2a3644;">7</div>
<div class="t" style="left:-129px;width:300px;text-align:center;top:329px;font-size:12px;line-height:18px;color:#2a3644;">8</div>
<div class="t" style="left:-129px;width:300px;text-align:center;top:349px;font-size:12px;line-height:18px;color:#2a3644;">9</div>
<div class="t" style="left:-129px;width:300px;text-align:center;top:369px;font-size:12px;line-height:18px;color:#2a3644;">10</div>
<div class="t" style="left:-129px;width:300px;text-align:center;top:389px;font-size:12px;line-height:18px;color:#2a3644;">11</div>
<div class="t" style="left:-129px;width:300px;text-align:center;top:409px;font-size:12px;line-height:18px;color:#2a3644;">12</div>
<div class="t" style="left:-129px;width:300px;text-align:center;top:429px;font-size:12px;line-height:18px;color:#2a3644;">13</div>
<div class="t" style="left:-129px;width:300px;text-align:center;top:449px;font-size:12px;line-height:18px;color:#2a3644;">14</div>
<div class="t" style="left:-129px;width:300px;text-align:center;top:469px;font-size:12px;line-height:18px;color:#2a3644;">15</div>
<div class="t" style="left:-129px;width:300px;text-align:center;top:489px;font-size:12px;line-height:18px;color:#2a3644;">16</div>
<div class="t" style="left:-129px;width:300px;text-align:center;top:509px;font-size:12px;line-height:18px;color:#2a3644;">17</div>
<div class="t" style="left:-129px;width:300px;text-align:center;top:529px;font-size:12px;line-height:18px;color:#2a3644;">18</div>
<div class="t" style="left:-129px;width:300px;text-align:center;top:549px;font-size:12px;line-height:18px;color:#2a3644;">19</div>
<div class="t" style="left:-129px;width:300px;text-align:center;top:569px;font-size:12px;line-height:18px;color:#2a3644;">20</div>
<div class="t" style="left:-129px;width:300px;text-align:center;top:589px;font-size:12px;line-height:18px;color:#2a3644;">21</div>
<div class="t" style="left:36px;top:188px;font-size:12.5px;line-height:20px;color:#000;letter-spacing:0.68px;">Наименование товара</div>
<div class="t" style="left:188px;top:188px;font-size:12.5px;line-height:20px;color:#000;letter-spacing:0.5px;">Дата</div>
<div class="t" style="left:259px;top:188px;font-size:12.5px;line-height:20px;color:#000;letter-spacing:0.74px;">Сумма выручки, руб.</div>
<div class="t" style="left:36px;top:208px;font-size:12.5px;line-height:20px;color:#000;letter-spacing:0.68px;">Картофель</div>
<div class="t" style="left:150px;width:105px;text-align:right;top:208px;font-size:12.5px;line-height:20px;color:#000;letter-spacing:0.2px;">01.05.2016</div>
<div class="t" style="left:290px;width:107px;text-align:right;top:208px;font-size:12.5px;line-height:20px;color:#000;letter-spacing:0.2px;">10526</div>
<div class="t" style="left:36px;top:228px;font-size:12.5px;line-height:20px;color:#000;letter-spacing:0.68px;">Рыба</div>
<div class="t" style="left:150px;width:105px;text-align:right;top:228px;font-size:12.5px;line-height:20px;color:#000;letter-spacing:0.2px;">01.05.2016</div>
<div class="t" style="left:290px;width:107px;text-align:right;top:228px;font-size:12.5px;line-height:20px;color:#000;letter-spacing:0.2px;">17456</div>
<div class="t" style="left:36px;top:248px;font-size:12.5px;line-height:20px;color:#000;letter-spacing:0.68px;">Мясо</div>
<div class="t" style="left:150px;width:105px;text-align:right;top:248px;font-size:12.5px;line-height:20px;color:#000;letter-spacing:0.2px;">01.05.2016</div>
<div class="t" style="left:290px;width:107px;text-align:right;top:248px;font-size:12.5px;line-height:20px;color:#000;letter-spacing:0.2px;">21563</div>
<div class="t" style="left:36px;top:268px;font-size:12.5px;line-height:20px;color:#000;letter-spacing:0.68px;">Сахар</div>
<div class="t" style="left:150px;width:105px;text-align:right;top:268px;font-size:12.5px;line-height:20px;color:#000;letter-spacing:0.2px;">01.05.2016</div>
<div class="t" style="left:290px;width:107px;text-align:right;top:268px;font-size:12.5px;line-height:20px;color:#000;letter-spacing:0.2px;">8556</div>
<div class="t" style="left:36px;top:288px;font-size:12.5px;line-height:20px;color:#000;letter-spacing:0.68px;">Чай</div>
<div class="t" style="left:150px;width:105px;text-align:right;top:288px;font-size:12.5px;line-height:20px;color:#000;letter-spacing:0.2px;">01.05.2016</div>
<div class="t" style="left:290px;width:107px;text-align:right;top:288px;font-size:12.5px;line-height:20px;color:#000;letter-spacing:0.2px;">4559</div>
<div class="t" style="left:36px;top:308px;font-size:12.5px;line-height:20px;color:#000;letter-spacing:0.68px;">Картофель</div>
<div class="t" style="left:150px;width:105px;text-align:right;top:308px;font-size:12.5px;line-height:20px;color:#000;letter-spacing:0.2px;">02.05.2016</div>
<div class="t" style="left:290px;width:107px;text-align:right;top:308px;font-size:12.5px;line-height:20px;color:#000;letter-spacing:0.2px;">11896</div>
<div class="t" style="left:36px;top:328px;font-size:12.5px;line-height:20px;color:#000;letter-spacing:0.68px;">Рыба</div>
<div class="t" style="left:150px;width:105px;text-align:right;top:328px;font-size:12.5px;line-height:20px;color:#000;letter-spacing:0.2px;">02.05.2016</div>
<div class="t" style="left:290px;width:107px;text-align:right;top:328px;font-size:12.5px;line-height:20px;color:#000;letter-spacing:0.2px;">21546</div>
<div class="t" style="left:36px;top:348px;font-size:12.5px;line-height:20px;color:#000;letter-spacing:0.68px;">Мясо</div>
<div class="t" style="left:150px;width:105px;text-align:right;top:348px;font-size:12.5px;line-height:20px;color:#000;letter-spacing:0.2px;">02.05.2016</div>
<div class="t" style="left:290px;width:107px;text-align:right;top:348px;font-size:12.5px;line-height:20px;color:#000;letter-spacing:0.2px;">10526</div>
<div class="t" style="left:36px;top:368px;font-size:12.5px;line-height:20px;color:#000;letter-spacing:0.68px;">Сахар</div>
<div class="t" style="left:150px;width:105px;text-align:right;top:368px;font-size:12.5px;line-height:20px;color:#000;letter-spacing:0.2px;">02.05.2016</div>
<div class="t" style="left:290px;width:107px;text-align:right;top:368px;font-size:12.5px;line-height:20px;color:#000;letter-spacing:0.2px;">7855</div>
<div class="t" style="left:36px;top:388px;font-size:12.5px;line-height:20px;color:#000;letter-spacing:0.68px;">Чай</div>
<div class="t" style="left:150px;width:105px;text-align:right;top:388px;font-size:12.5px;line-height:20px;color:#000;letter-spacing:0.2px;">02.05.2016</div>
<div class="t" style="left:290px;width:107px;text-align:right;top:388px;font-size:12.5px;line-height:20px;color:#000;letter-spacing:0.2px;">3296</div>
<div class="t" style="left:36px;top:408px;font-size:12.5px;line-height:20px;color:#000;letter-spacing:0.68px;">Картофель</div>
<div class="t" style="left:150px;width:105px;text-align:right;top:408px;font-size:12.5px;line-height:20px;color:#000;letter-spacing:0.2px;">03.05.2016</div>
<div class="t" style="left:290px;width:107px;text-align:right;top:408px;font-size:12.5px;line-height:20px;color:#000;letter-spacing:0.2px;">15456</div>
<div class="t" style="left:36px;top:428px;font-size:12.5px;line-height:20px;color:#000;letter-spacing:0.68px;">Рыба</div>
<div class="t" style="left:150px;width:105px;text-align:right;top:428px;font-size:12.5px;line-height:20px;color:#000;letter-spacing:0.2px;">03.05.2016</div>
<div class="t" style="left:290px;width:107px;text-align:right;top:428px;font-size:12.5px;line-height:20px;color:#000;letter-spacing:0.2px;">11496</div>
<div class="t" style="left:36px;top:448px;font-size:12.5px;line-height:20px;color:#000;letter-spacing:0.68px;">Мясо</div>
<div class="t" style="left:150px;width:105px;text-align:right;top:448px;font-size:12.5px;line-height:20px;color:#000;letter-spacing:0.2px;">03.05.2016</div>
<div class="t" style="left:290px;width:107px;text-align:right;top:448px;font-size:12.5px;line-height:20px;color:#000;letter-spacing:0.2px;">9568</div>
<div class="t" style="left:36px;top:468px;font-size:12.5px;line-height:20px;color:#000;letter-spacing:0.68px;">Сахар</div>
<div class="t" style="left:150px;width:105px;text-align:right;top:468px;font-size:12.5px;line-height:20px;color:#000;letter-spacing:0.2px;">03.05.2016</div>
<div class="t" style="left:290px;width:107px;text-align:right;top:468px;font-size:12.5px;line-height:20px;color:#000;letter-spacing:0.2px;">1234</div>
<div class="t" style="left:36px;top:488px;font-size:12.5px;line-height:20px;color:#000;letter-spacing:0.68px;">Чай</div>
<div class="t" style="left:150px;width:105px;text-align:right;top:488px;font-size:12.5px;line-height:20px;color:#000;letter-spacing:0.2px;">03.05.2016</div>
<div class="t" style="left:290px;width:107px;text-align:right;top:488px;font-size:12.5px;line-height:20px;color:#000;letter-spacing:0.2px;">956</div>
<div class="t" style="left:36px;top:508px;font-size:12.5px;line-height:20px;color:#000;letter-spacing:0.68px;">Картофель</div>
<div class="t" style="left:150px;width:105px;text-align:right;top:508px;font-size:12.5px;line-height:20px;color:#000;letter-spacing:0.2px;">04.05.2016</div>
<div class="t" style="left:290px;width:107px;text-align:right;top:508px;font-size:12.5px;line-height:20px;color:#000;letter-spacing:0.2px;">14589</div>
<div class="t" style="left:36px;top:528px;font-size:12.5px;line-height:20px;color:#000;letter-spacing:0.68px;">Рыба</div>
<div class="t" style="left:150px;width:105px;text-align:right;top:528px;font-size:12.5px;line-height:20px;color:#000;letter-spacing:0.2px;">04.05.2016</div>
<div class="t" style="left:290px;width:107px;text-align:right;top:528px;font-size:12.5px;line-height:20px;color:#000;letter-spacing:0.2px;">10456</div>
<div class="t" style="left:36px;top:548px;font-size:12.5px;line-height:20px;color:#000;letter-spacing:0.68px;">Мясо</div>
<div class="t" style="left:150px;width:105px;text-align:right;top:548px;font-size:12.5px;line-height:20px;color:#000;letter-spacing:0.2px;">04.05.2016</div>
<div class="t" style="left:290px;width:107px;text-align:right;top:548px;font-size:12.5px;line-height:20px;color:#000;letter-spacing:0.2px;">15461</div>
<div class="t" style="left:36px;top:568px;font-size:12.5px;line-height:20px;color:#000;letter-spacing:0.68px;">Сахар</div>
<div class="t" style="left:150px;width:105px;text-align:right;top:568px;font-size:12.5px;line-height:20px;color:#000;letter-spacing:0.2px;">04.05.2016</div>
<div class="t" style="left:290px;width:107px;text-align:right;top:568px;font-size:12.5px;line-height:20px;color:#000;letter-spacing:0.2px;">3256</div>
<div class="t" style="left:36px;top:588px;font-size:12.5px;line-height:20px;color:#000;letter-spacing:0.68px;">Чай</div>
<div class="t" style="left:150px;width:105px;text-align:right;top:588px;font-size:12.5px;line-height:20px;color:#000;letter-spacing:0.2px;">04.05.2016</div>
<div class="t" style="left:290px;width:107px;text-align:right;top:588px;font-size:12.5px;line-height:20px;color:#000;letter-spacing:0.2px;">2458</div>
<div class="b" style="left:8px;top:186px;width:26px;height:1px;background:#e3a040;"></div>
<div class="b" style="left:34px;top:187px;width:152px;height:1px;background:#000;"></div>
<div class="b" style="left:34px;top:187px;width:1px;height:20px;background:#000;"></div>
<div class="b" style="left:184px;top:187px;width:3px;height:16px;background:#000;"></div>
<div class="b" style="left:34px;top:205px;width:148px;height:3px;background:#000;"></div>
<div class="b" style="left:182px;top:203px;width:7px;height:7px;background:#000;border:1px solid #fff;"></div>
<div class="b" style="left:862px;top:167px;width:16px;height:436px;background:linear-gradient(90deg,#d6d9dd 0px,#d9dce0 4px,#dde1e5 5px,#dfe3e7 100%);"></div>
<div class="b" style="left:862px;top:166px;width:16px;height:1px;background:#9ea6ae;"></div>
<div class="b" style="left:863px;top:167px;width:14px;height:8px;background:#fff;border:1px solid #8a939c;"></div>
<div class="b" style="left:866px;top:170px;width:8px;height:1px;background:#8a939c;"></div>
<svg class="b" style="left:865px;top:180px;" width="10" height="6" viewBox="0 0 10 6"><path d="M0 6 L5 0.5 L10 6 Z" fill="#3f4650"/></svg>
<div class="b" style="left:862px;top:192px;width:15px;height:187px;background:linear-gradient(90deg,#f4f5f7,#e8eaee 50%,#dde1e6);border:1px solid #8f979f;border-radius:2px;"></div>
<div class="b" style="left:866px;top:282px;width:8px;height:1px;background:#7b848d;"></div>
<div class="b" style="left:866px;top:284px;width:8px;height:1px;background:#7b848d;"></div>
<div class="b" style="left:866px;top:286px;width:8px;height:1px;background:#7b848d;"></div>
<div class="b" style="left:866px;top:288px;width:8px;height:1px;background:#7b848d;"></div>
<svg class="b" style="left:865px;top:592px;" width="10" height="6" viewBox="0 0 10 6"><path d="M0 0 L10 0 L5 5.5 Z" fill="#3f4650"/></svg>
<div class="b" style="left:8px;top:603px;width:854px;height:16px;background:#dfe3e8;"></div>
<div class="b" style="left:8px;top:603px;width:63px;height:15px;background:#dfe3e8;border-top:1px solid #a4abb3;border-right:1px solid #a4abb3;"></div>
<svg class="b" style="left:14px;top:607px;" width="7" height="7" viewBox="0 0 7 7"><rect x="0" y="0" width="1.2" height="7" fill="#3f4650"/><path d="M6 0 V7 L1.5 3.5 Z" fill="#3f4650"/></svg>
<svg class="b" style="left:29px;top:607px;" width="6" height="7" viewBox="0 0 6 7"><path d="M5 0 V7 L0.5 3.5 Z" fill="#3f4650"/></svg>
<svg class="b" style="left:44px;top:607px;" width="6" height="7" viewBox="0 0 6 7"><path d="M0 0 V7 L4.5 3.5 Z" fill="#3f4650"/></svg>
<svg class="b" style="left:57px;top:607px;" width="8" height="7" viewBox="0 0 8 7"><path d="M0 0 V7 L4.5 3.5 Z" fill="#3f4650"/><rect x="5.5" y="0" width="1.2" height="7" fill="#3f4650"/></svg>
<svg class="b" style="left:71px;top:603px;" width="450" height="16" viewBox="0 0 450 16">
<defs><linearGradient id="tg" x1="0" y1="0" x2="0" y2="1"><stop offset="0" stop-color="#eef0f3"/><stop offset="1" stop-color="#e3e6ea"/></linearGradient></defs>
<rect x="0" y="0" width="450" height="16" fill="#dfe3e8"/>
<path d="M0 0.5 H450" stroke="#a4abb3"/>
<path d="M49 15 L63 0.5 H115.5 L101.5 15 Z" fill="url(#tg)"/>
<path d="M101.5 15 L115.5 0.5 H168.3 L155 15 Z" fill="url(#tg)"/>
<path d="M155 15 L168.3 0.5 H201.5 L188 15 Z" fill="url(#tg)"/>
<path d="M63 1.5 H115 M116 1.5 H168 M169 1.5 H201" stroke="#ffffff" stroke-opacity="0.8"/>
<path d="M63 0.5 H202" stroke="#a4abb3"/>
<path d="M101.5 15 L115.5 0.5 M155 15 L168.3 0.5 M188 15 L201.5 0.5" stroke="#8f979f" stroke-width="0.9"/>
<path d="M-1 -1 H63 L49 15 H-1 Z" fill="#ffffff"/>
<path d="M63 0.5 L49 15" stroke="#8f979f" stroke-width="0.9"/>
<path d="M0 15.5 H450" stroke="#a4abb3"/>
</svg>
<div class="t" style="left:80px;top:604px;font-size:12.5px;line-height:16px;color:#333;font-weight:bold;">Лист1</div>
<div class="t" style="left:134px;top:604px;font-size:12.5px;line-height:16px;color:#444;">Лист2</div>
<div class="t" style="left:187px;top:604px;font-size:12.5px;line-height:16px;color:#444;">Лист3</div>
<svg class="b" style="left:240px;top:604px;" width="17" height="14" viewBox="0 0 17 14"><defs><linearGradient id="ig" x1="0" y1="0" x2="1" y2="1"><stop offset="0" stop-color="#ffffff"/><stop offset="1" stop-color="#c3cad4"/></linearGradient></defs>
<path d="M3.5 3.5 H14.5 V11 C12 11 12 12.5 10 12.5 C8 12.5 8 11 5.5 11 C4 11 3.5 12 3.5 12 Z" fill="url(#ig)" stroke="#4a62a8" stroke-width="0.9"/>
<path d="M4.5 0.5 V8.5 M0.5 4.5 H8.5 M1.8 1.8 L7.2 7.2 M7.2 1.8 L1.8 7.2" stroke="#f0a030" stroke-width="1.1"/><circle cx="4.5" cy="4.5" r="1.8" fill="#fff6a0"/></svg>
<div class="b" style="left:520px;top:603px;width:342px;height:16px;background:linear-gradient(180deg,#d5d8dc,#d9dce0 40%,#dee2e6 50%,#e0e4e8);border-top:1px solid #b9bfc6;"></div>
<div class="b" style="left:520px;top:605px;width:8px;height:13px;background:#fff;border:1px solid #7f8891;"></div>
<div class="b" style="left:523px;top:607px;width:1px;height:9px;background:#7f8891;"></div>
<svg class="b" style="left:532px;top:608px;" width="6" height="8" viewBox="0 0 6 8"><path d="M6 0 V8 L0.5 4 Z" fill="#3f4650"/></svg>
<div class="b" style="left:545px;top:603px;width:262px;height:16px;background:linear-gradient(180deg,#f6f7f9,#eceef1 50%,#dcdfe3);border:1px solid #7d858e;border-radius:2px;"></div>
<div class="b" style="left:671px;top:608px;width:1px;height:7px;background:#7b848d;"></div>
<div class="b" style="left:673px;top:608px;width:1px;height:7px;background:#7b848d;"></div>
<div class="b" style="left:675px;top:608px;width:1px;height:7px;background:#7b848d;"></div>
<div class="b" style="left:677px;top:608px;width:1px;height:7px;background:#7b848d;"></div>
<svg class="b" style="left:843px;top:608px;" width="6" height="8" viewBox="0 0 6 8"><path d="M0 0 V8 L5.5 4 Z" fill="#3f4650"/></svg>
<div class="b" style="left:854px;top:604px;width:8px;height:14px;background:#fff;border:1px solid #7f8891;"></div>
<div class="b" style="left:857px;top:607px;width:1px;height:8px;background:#7f8891;"></div>
<div class="b" style="left:862px;top:603px;width:16px;height:16px;background:#dfe3e8;"></div>
<div class="b" style="left:8px;top:619px;width:871px;height:22px;background:linear-gradient(180deg,#f5f6f8 0px,#e4e7eb 2px,#dcdfe3 9px,#cfd3d8 14px,#c3c7cc 21px);border-top:1px solid #a4abb3;border-bottom:1px solid #5f6a75;border-right:1px solid #8a939c;"></div>
<div class="t" style="left:16px;top:623px;font-size:11.5px;line-height:14px;color:#333;">Готово</div>
<div class="b" style="left:62px;top:621px;width:1px;height:19px;background:#a9b0b8;"></div>
<svg class="b" style="left:72px;top:623px;" width="15" height="13" viewBox="0 0 15 13"><defs><radialGradient id="rb" cx="40%" cy="35%" r="65%"><stop offset="0" stop-color="#ffb080"/><stop offset="0.5" stop-color="#e84a20"/><stop offset="1" stop-color="#b02a10"/></radialGradient></defs>
<rect x="0.5" y="0.5" width="14" height="12" fill="#ffffff" stroke="#2c4f8c"/><rect x="1" y="1" width="13" height="2.5" fill="#5a8ee0"/>
<path d="M2.5 6.5 H4.5 M6 6.5 H8.5 M10 6.5 H12.5 M2.5 8.5 H4.5 M6 8.5 H8.5 M10 8.5 H12.5 M2.5 10.5 H4.5 M6 10.5 H8.5 M10 10.5 H12.5" stroke="#8aa6dc" stroke-width="1"/>
<circle cx="3" cy="3" r="3" fill="url(#rb)"/></svg>
<div class="b" style="left:97px;top:621px;width:1px;height:19px;background:#a9b0b8;"></div>
<div class="b" style="left:621px;top:621px;width:1px;height:19px;background:#a9b0b8;"></div>
<div class="b" style="left:626px;top:621px;width:19px;height:19px;background:linear-gradient(180deg,#fde9a3,#fcd970);border:1px solid #e8a33c;border-radius:3px;"></div>
<svg class="b" style="left:629px;top:625px;" width="13" height="10" viewBox="0 0 13 10"><rect x="0" y="0" width="13" height="10" fill="#5a6470"/><path d="M1 1.5 H4 M5 1.5 H8 M9 1.5 H12 M1 4.5 H4 M5 4.5 H8 M9 4.5 H12 M1 7.5 H4 M5 7.5 H8 M9 7.5 H12" stroke="#ffffff" stroke-width="2"/></svg>
<svg class="b" style="left:647px;top:625px;" width="14" height="11" viewBox="0 0 14 11"><rect x="0.5" y="0.5" width="13" height="10" fill="#b9c0c8" stroke="#5a6470"/><rect x="3.5" y="1.5" width="7" height="8" fill="#fff" stroke="#6a7480"/><path d="M5 4 H9 M5 6 H9" stroke="#8a949e"/></svg>
<svg class="b" style="left:666px;top:625px;" width="14" height="11" viewBox="0 0 14 11"><rect x="0.5" y="0.5" width="13" height="10" fill="#c1c7ce" stroke="#5a6470"/><rect x="2" y="1" width="4" height="6" fill="#fff" stroke="#5a6470" stroke-width="0.8"/><rect x="7" y="1" width="4" height="6" fill="#fff" stroke="#5a6470" stroke-width="0.8"/></svg>
<div class="t" style="left:692px;top:623px;font-size:11.5px;line-height:14px;color:#333;">100%</div>
<div class="b" style="left:742px;top:629px;width:102px;height:2px;background:#b9bfc6;border-bottom:1px solid #fff;"></div>
<svg class="b" style="left:726px;top:621px;" width="18" height="18" viewBox="0 0 18 18"><circle cx="9" cy="9" r="7.5" fill="#f4f5f7" stroke="#6d757e"/><rect x="5" y="8" width="8" height="2.4" fill="#3f4650"/></svg>
<svg class="b" style="left:842px;top:621px;" width="18" height="18" viewBox="0 0 18 18"><circle cx="9" cy="9" r="7.5" fill="#f4f5f7" stroke="#6d757e"/><rect x="5" y="8" width="8" height="2.4" fill="#3f4650"/><rect x="7.8" y="4.8" width="2.4" height="8.4" fill="#3f4650"/></svg>
<svg class="b" style="left:789px;top:623px;" width="9" height="13" viewBox="0 0 9 13"><path d="M0.5 0.5 H8.5 V8.5 L4.5 12.5 L0.5 8.5 Z" fill="#f6f7f9" stroke="#6d757e"/></svg>
<svg class="b" style="left:868px;top:630px;" width="10" height="10" viewBox="0 0 10 10"><g fill="#aab1b9"><rect x="7" y="1" width="2" height="2"/><rect x="4" y="4" width="2" height="2"/><rect x="7" y="4" width="2" height="2"/><rect x="1" y="7" width="2" height="2"/><rect x="4" y="7" width="2" height="2"/><rect x="7" y="7" width="2" height="2"/></g></svg>
<div class="b" style="left:6px;top:51px;width:1px;height:592px;background:rgba(255,255,255,0.75);"></div>
<div class="b" style="left:879px;top:51px;width:1px;height:592px;background:rgba(255,255,255,0.75);"></div>
<div class="b" style="left:7px;top:51px;width:1px;height:591px;background:#6b7783;"></div>
<div class="b" style="left:878px;top:138px;width:1px;height:504px;background:#6b7783;"></div>
<div class="b" style="left:7px;top:641px;width:872px;height:1px;background:#5f6a75;"></div>
<div class="b" style="left:7px;top:642px;width:872px;height:1px;background:#eef5fd;"></div>
</body></html>
